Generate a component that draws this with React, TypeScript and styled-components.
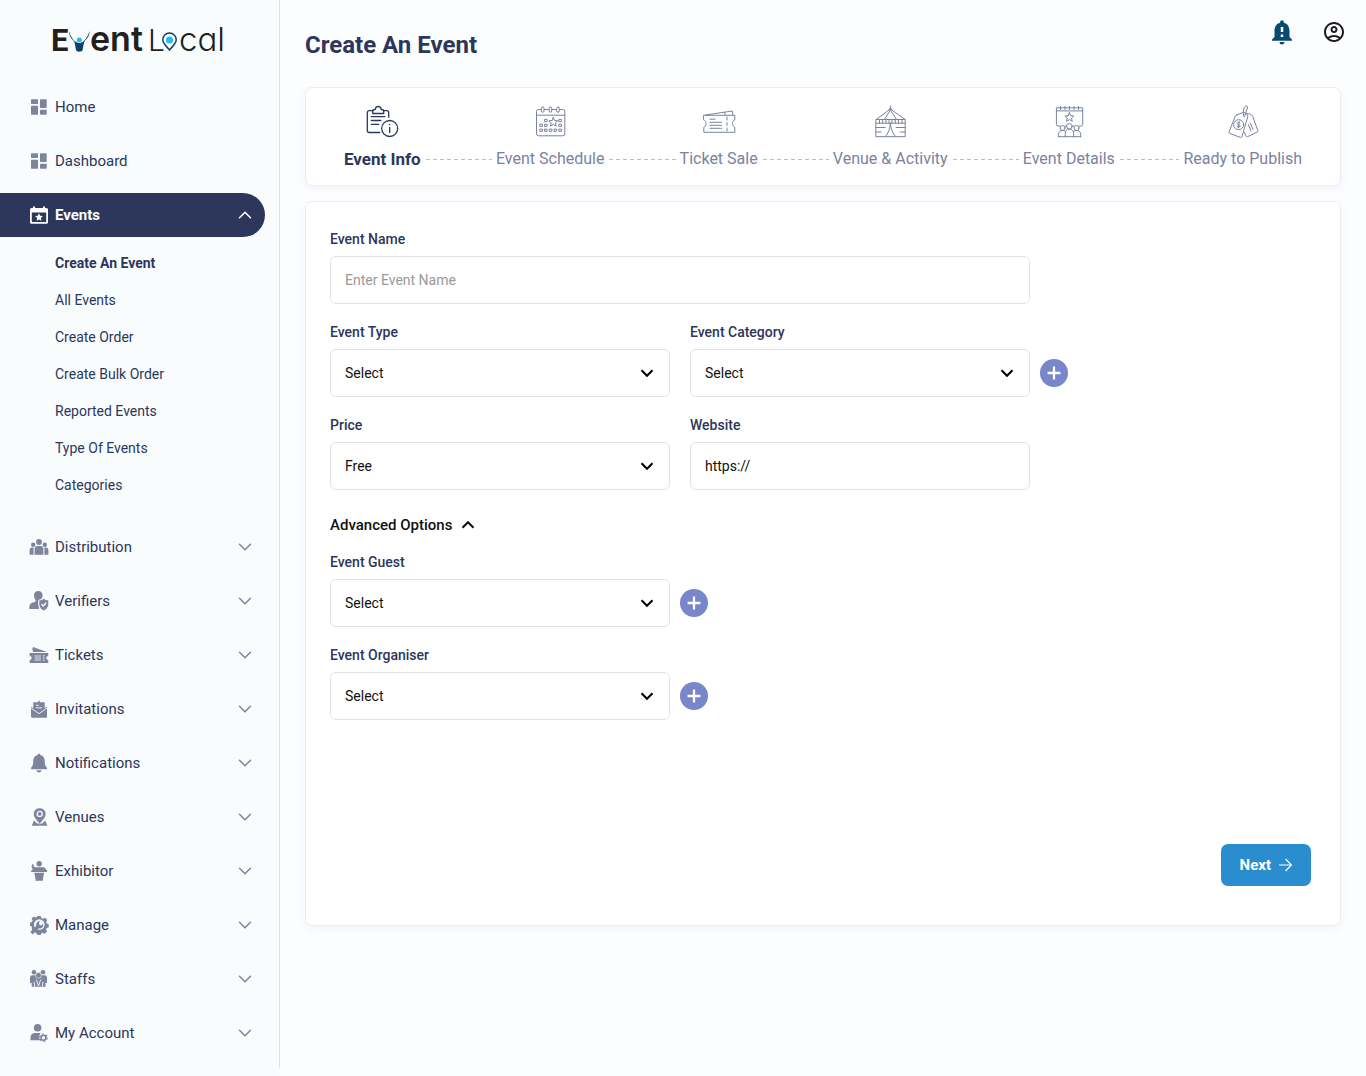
import React, { useState } from "react";
import styled, { createGlobalStyle, css } from "styled-components";
import { MdNotificationImportant, MdOutlineAccountCircle } from "react-icons/md";

const color = {
  navy: "#2d365b",
  muted: "#7b829f",
  icon: "#7d849b",
  sidebar: "#f8fcfd",
  page: "#fcfdff",
  line: "#dfe4ea",
  blue: "#298dcf",
  lilac: "#7787c9",
};

const GlobalStyle = createGlobalStyle`
  *, *::before, *::after { box-sizing: border-box; }
  body {
    margin: 0;
    background: ${color.page};
    color: ${color.navy};
    font-family: Roboto, "Liberation Sans", sans-serif;
    font-size: 15px;
  }
  button, input, select { font: inherit; }
`;

/* ---------- layout ---------- */

const Shell = styled.div`
  display: flex;
  min-height: 100vh;
`;

const Sidebar = styled.aside`
  flex: 0 0 280px;
  background: ${color.sidebar};
`;

const SidebarInner = styled.div`
  border-right: 1px solid #dbe1e5;
  padding: 17px 14px 13px 0;
`;

const LogoLink = styled.a`
  display: block;
  width: 192px;
  height: 44px;
  margin: 0 0 24px 44px;
`;

const List = styled.ul`
  list-style: none;
  margin: 0;
  padding: 0;
`;

const NavList = styled(List)`
  display: flex;
  flex-direction: column;
  gap: 10px;
`;

const navRow = css<{ $active?: boolean }>`
  display: flex;
  align-items: center;
  gap: 6px;
  width: 100%;
  height: 44px;
  padding: 0 14px 0 29px;
  border: 0;
  border-radius: 0 22px 22px 0;
  background: ${(p) => (p.$active ? color.navy : "transparent")};
  color: ${(p) => (p.$active ? "#fff" : color.navy)};
  font-weight: ${(p) => (p.$active ? 700 : 400)};
  text-align: left;
  text-decoration: none;
  cursor: pointer;

  > svg {
    color: ${(p) => (p.$active ? "#fff" : color.icon)};
  }
`;

const NavLink = styled.a<{ $active?: boolean }>`
  ${navRow}
`;

const NavButton = styled.button<{ $active?: boolean }>`
  ${navRow}
`;

const NavText = styled.span`
  flex: 1;
`;

const SubList = styled(List)`
  padding: 8px 0 11px 55px;
`;

const SubLink = styled.a<{ $current?: boolean }>`
  display: block;
  font-size: 14px;
  line-height: 37px;
  font-weight: ${(p) => (p.$current ? 700 : 400)};
  color: ${color.navy};
  text-decoration: none;
`;

const Main = styled.main`
  flex: 1;
  min-width: 0;
  padding: 0 25px 25px;
`;

const Header = styled.header`
  display: flex;
  justify-content: space-between;
  align-items: flex-start;
  height: 87px;
  margin-right: -5px;
`;

const Title = styled.h1`
  margin: 31px 0 0;
  font-size: 24px;
  line-height: 28px;
  font-weight: 700;
`;

const HeaderActions = styled.div`
  display: flex;
  align-items: center;
  gap: 25px;
  margin-top: 17px;
`;

const IconButton = styled.button`
  display: flex;
  padding: 0;
  border: 0;
  background: none;
  cursor: pointer;
`;

const Card = styled.section`
  border: 1px solid #ebedf0;
  border-radius: 7px;
  background: #fff;
  box-shadow: 0 3px 8px rgba(45, 54, 91, 0.05);
`;

const StepCard = styled(Card)`
  margin-bottom: 15px;
  padding: 18px 38px 15px;
`;

const Steps = styled.ol`
  display: flex;
  align-items: flex-end;
  margin: 0;
  padding: 0;
  list-style: none;
`;

const StepItem = styled.li<{ $grow: number }>`
  display: flex;
  align-items: flex-end;
  flex: ${(p) => p.$grow} 0 auto;
`;

const StepButton = styled.button<{ $active?: boolean }>`
  display: flex;
  flex-direction: column;
  align-items: center;
  gap: 10px;
  padding: 0;
  border: 0;
  background: none;
  color: ${(p) => (p.$active ? color.navy : color.muted)};
  font-size: ${(p) => (p.$active ? 17 : 16)}px;
  line-height: 22px;
  font-weight: ${(p) => (p.$active ? 700 : 400)};
  white-space: nowrap;
  cursor: pointer;
`;

const Dashes = styled.span`
  flex: 1;
  height: 1px;
  margin: 0 4px 10px 5px;
  background: repeating-linear-gradient(90deg, #b9bdca 0 4px, transparent 4px 7px);
`;

const FormCard = styled(Card)`
  padding: 29px 29px 39px 24px;
`;

const Row = styled.div`
  display: flex;
  flex-wrap: wrap;
  gap: 20px;
  margin-bottom: 20px;
`;

const Field = styled.div<{ $wide?: boolean }>`
  --control: ${(p) => (p.$wide ? "700px" : "340px")};
  display: flex;
  flex-direction: column;
  gap: 8px;
  max-width: 100%;
`;

const Label = styled.label`
  font-size: 14px;
  line-height: 17px;
  font-weight: 500;
`;

const ControlRow = styled.div`
  display: flex;
  align-items: center;
  gap: 10px;
`;

const control = css`
  width: 100%;
  height: 48px;
  padding: 0 14px;
  border: 1px solid ${color.line};
  border-radius: 6px;
  background: #fff;
  color: #111;
  font-size: 14px;
  outline-color: ${color.lilac};
`;

const Input = styled.input`
  ${control}
  width: var(--control);
  max-width: 100%;
  &::placeholder { color: #999; opacity: 1; }
`;

const SelectWrap = styled.div`
  position: relative;
  width: var(--control);
  max-width: 100%;
  > svg {
    position: absolute;
    right: 17px;
    top: 18px;
    color: #000;
    pointer-events: none;
  }
`;

const Select = styled.select`
  ${control}
  appearance: none;
  cursor: pointer;
`;

const AddButton = styled.button`
  display: flex;
  align-items: center;
  justify-content: center;
  flex: 0 0 28px;
  height: 28px;
  padding: 0;
  border: 0;
  border-radius: 50%;
  background: ${color.lilac};
  cursor: pointer;
`;

const AdvancedButton = styled.button`
  display: flex;
  align-items: center;
  gap: 10px;
  margin: 26px 0 20px;
  padding: 0;
  border: 0;
  background: none;
  color: #111;
  font-weight: 500;
  line-height: 18px;
  cursor: pointer;
`;

const Actions = styled.div`
  display: flex;
  justify-content: flex-end;
  margin-top: 124px;
`;

const NextButton = styled.button`
  display: flex;
  align-items: center;
  gap: 8px;
  height: 42px;
  padding: 0 19px;
  border: 0;
  border-radius: 7px;
  background: ${color.blue};
  color: #fff;
  font-weight: 700;
  cursor: pointer;
`;

/* ---------- drawings ---------- */

const Chevron = ({ up, bold }: { up?: boolean; bold?: boolean }) => (
  <svg width="12" height="12" viewBox="0 0 12 12" fill="none" stroke="currentColor" overflow="visible"
    strokeWidth={bold ? 2 : 1.5} strokeLinecap={bold ? "butt" : "round"} aria-hidden="true">
    <path d={up ? "M.5 8.800L6 3.200l5.500 5.600" : "M.5 3.200L6 8.800l5.500-5.600"} />
  </svg>
);

const Logo = () => (
  <svg width="192" height="44" viewBox="0 0 192 44" role="img" aria-label="Event Local">
    <g fontFamily='Inter, "Liberation Sans", sans-serif' fill="#231f20">
      <text x="7" y="34" fontSize="31" fontWeight="700" fontFamily='Roboto, "Liberation Sans", sans-serif'>E</text>
      <text x="46" y="34" fontSize="34" fontWeight="600">ent</text>
      <text x="104" y="34" fontSize="30" fontWeight="300">L</text>
      <text x="135" y="34" fontSize="33" fontWeight="300" style={{ fontFeatureSettings: '"cv11"' }}>cal</text>
    </g>
    <g transform="translate(8 8)">
      <path d="M17 6c0 5 2.500 7.500 4.500 9.500 1.500 1.500 1.500 5 2.500 9.500.4 2.300 6.200 2.300 6.600 0 1-4.500 1-8 2.500-9.500 2-2 4.500-4.500 4.500-9.500-1.500 5-4.500 10-8 11.500-1.500.8-3.200.8-4.700 0-3.500-1.500-6.500-6.500-8-11.500z" fill="#0b4169" />
      <circle cx="27.300" cy="15" r="2.600" fill="#27bdf2" />
      <path d="M117.500 25c-3-3.800-6.700-6.300-6.700-10.300a6.700 6.700 0 0 1 13.400 0c0 4-3.700 6.500-6.700 10.300z" fill="#fff" stroke="#0b4169" strokeWidth="1.500" />
      <circle cx="117.500" cy="15" r="3.600" fill="#27bdf2" />
    </g>
  </svg>
);

const NavSvg = ({ children }: { children: React.ReactNode }) => (
  <svg width="20" height="20" viewBox="0 0 20 20" fill="currentColor" aria-hidden="true">{children}</svg>
);

const cut = color.sidebar;

const navIcons = {
  grid: (
    <NavSvg>
      <rect x="2" y="2.300" width="7" height="4.700" rx=".7" />
      <rect x="2" y="8.700" width="7" height="9" rx=".7" />
      <rect x="11" y="2.300" width="6.700" height="8.700" rx=".7" />
      <rect x="11" y="12.700" width="6.700" height="5" rx=".7" />
    </NavSvg>
  ),
  events: (
    <NavSvg>
      <path fillRule="evenodd" d="M4 1.500h2V3h8V1.500h2V3h1.500A1.500 1.500 0 0 1 19 4.500v12.700a1.500 1.500 0 0 1-1.500 1.500h-15A1.500 1.500 0 0 1 1 17.200V4.500A1.500 1.500 0 0 1 2.500 3H4zM2.800 7.500V17h14.400V7.500z" />
      <path d="M10 8.200l1.200 2.500 2.700.4-2 1.900.5 2.700-2.400-1.300-2.400 1.300.5-2.700-2-1.900 2.700-.4z" />
    </NavSvg>
  ),
  group: (
    <NavSvg>
      <circle cx="10" cy="5" r="2.900" />
      <circle cx="4.200" cy="7.800" r="2.200" />
      <circle cx="15.800" cy="7.800" r="2.200" />
      <path d="M5.600 17.700v-5.500a3.200 3.200 0 0 1 3.200-3.200h2.400a3.200 3.200 0 0 1 3.200 3.200v5.500zM.6 17.700v-4.400c0-1.600 1-2.700 2.600-2.700h1.500c-.3 2 0 5-.1 7.100zM19.400 17.700v-4.400c0-1.600-1-2.700-2.600-2.700h-1.500c.3 2 0 5 .1 7.100z" />
    </NavSvg>
  ),
  verifier: (
    <NavSvg>
      <path d="M9.300 0c2.600 0 4.300 1.800 4.300 4.300 0 1.200-.5 2.600-1.400 3.600L9 9.700 10 18H.3c0-4 1-5.700 3.500-6.500 2-.6 3-.9 3-2.300C5.500 8 5 6 5 4.300 5 1.800 6.700 0 9.300 0z" />
      <path d="M14.800 7.400c1.300 1 3 1.600 4.900 1.600v4c0 3.300-2 5.600-4.900 6.800-2.900-1.200-4.900-3.500-4.900-6.800V9c1.900 0 3.600-.6 4.900-1.600z" stroke={cut} strokeWidth=".8" />
      <path d="M12.500 13.300l1.700 1.700 3-3.200" fill="none" stroke={cut} strokeWidth="1.400" />
    </NavSvg>
  ),
  ticket: (
    <NavSvg>
      <path d="M3.500 7c.8-.8.500-1.700-.3-2.300L4 2l14 5z" />
      <path d="M.7 8h18.500v3a2 2 0 0 0 0 4v3H.7v-3a2 2 0 0 0 0-4z" />
      <path d="M5.500 11h6.500M5.500 13h6.500M5.500 15h6.500" stroke={cut} strokeWidth=".8" />
      <path d="M14.800 10v6" stroke={cut} strokeWidth="1" strokeDasharray="1.500 .8" />
    </NavSvg>
  ),
  invite: (
    <NavSvg>
      <path d="M4.300 3.300h4.500L10 1.300l1.200 2h4.500V11L10 14.500 4.300 11z" />
      <path d="M2 7.500l8 6 8-6v10a1.200 1.200 0 0 1-1.200 1.200H3.200A1.200 1.200 0 0 1 2 17.500z" />
      <path d="M2 9l8 5.700L18 9M7 6.300h2.500M7 8.800h6" fill="none" stroke={cut} strokeWidth=".9" />
    </NavSvg>
  ),
  bell: (
    <NavSvg>
      <path d="M10 .8c.8 0 1.300.5 1.300 1.300 2.800.6 4.400 2.700 4.400 5.400 0 4 .6 5.500 2.200 7.200.5.600.2 1.600-.7 1.600H2.800c-.9 0-1.200-1-.7-1.600 1.600-1.700 2.200-3.200 2.200-7.200 0-2.700 1.600-4.800 4.400-5.400 0-.8.5-1.300 1.300-1.300z" />
      <path d="M7.500 17.300h5c-.3 1.400-1.300 2.200-2.500 2.200s-2.200-.8-2.500-2.200z" />
    </NavSvg>
  ),
  pin: (
    <NavSvg>
      <path d="M5 13.500L2.800 18.700h15.600l-2.200-5.200-3 3h-5z" />
      <path d="M10.700 1C7.300 1 4.500 3.500 4.500 7c0 3.700 3.500 6.200 6.200 10.300 2.700-4.100 6.200-6.600 6.200-10.300C16.900 3.500 14.100 1 10.700 1z" stroke={cut} strokeWidth=".5" />
      <circle cx="10.700" cy="6.900" r="2.500" fill="none" stroke={cut} strokeWidth="1.300" />
    </NavSvg>
  ),
  podium: (
    <NavSvg>
      <circle cx="10.200" cy="2.700" r="2.700" />
      <path d="M3 3.500l1.300-.6.700 3.200c3 .6 7-.2 9.500.2 1.500.3 2.300 1.300 2.600 2.700h1v2H2.300V9h1.500L2.600 6z" />
      <path d="M5.300 11.700h9.800l-1.100 6.300v1.700H6.500V18z" />
    </NavSvg>
  ),
  manage: (
    <NavSvg>
      <path d="M8.300 1h3.400l.6 2 1.800.8 2-1 2.100 2.200-1 1.900.7 1.700 1.800.6v3l-1.900.7-.7 1.700.9 2-2.200 2.200-1.900-1-1.800.7-.6 1.900H8.500l-.4-1.500L4.600 16 3 14.500l-.3-3L1 10.800v-3l1.900-.7.7-1.700-1-2 2.200-2 1.900 1 1.200-.5z" />
      <circle cx="10.300" cy="9.500" r="5.300" fill={cut} />
      <path d="M1.200 16.900l6-6c-.6-2.500 1.200-4.900 4-4.700L9.900 8.100l.6 1.800 1.900.6 1.800-1.800c.8 3-1.800 5.300-4.300 4.600l-6 6z" />
    </NavSvg>
  ),
  staff: (
    <NavSvg>
      <circle cx="5" cy="3.300" r="2.300" />
      <circle cx="14" cy="3.300" r="2.300" />
      <path d="M1 8.700C1 7 2 6.200 3.500 6.200h12c1.500 0 2.500.8 2.500 2.500V14h-1.500v3.700H2.700V14H1z" />
      <circle cx="9.500" cy="6.300" r="2.900" stroke={cut} strokeWidth=".6" />
      <path d="M5.800 17.700l-.8-5M13.200 17.700l.8-5M7.300 10.500L9.500 17l2.200-6.500" stroke={cut} strokeWidth=".9" fill="none" />
    </NavSvg>
  ),
  account: (
    <NavSvg>
      <circle cx="8.600" cy="4.700" r="3.800" />
      <path d="M1.500 17.200v-2.500C1.500 12 3.300 10 6 10h5.500c-1.600 2.300-1.600 5-.3 7.200z" />
      <circle cx="14.500" cy="14.700" r="2.500" fill="none" stroke="currentColor" strokeWidth="1.600" />
      <circle cx="14.500" cy="14.700" r="3.700" fill="none" stroke="currentColor" strokeWidth="1.200" strokeDasharray="1.950 1.920" />
    </NavSvg>
  ),
};

const StepSvg = ({ children, weight = 1 }: { children: React.ReactNode; weight?: number }) => (
  <svg width="32" height="32" viewBox="0 0 32 32" fill="none" stroke="currentColor" strokeWidth={weight}
    strokeLinejoin="round" strokeLinecap="round" overflow="visible" aria-hidden="true">{children}</svg>
);

const star = (x: number, y: number) =>
  `M${x} ${y - 4.5}l1.300 3 3.200.3-2.400 2.100.8 3.200-2.900-1.700-2.900 1.700.8-3.200-2.400-2.100 3.200-.3z`;

const squares: [number, number][] = [
  [12, 14.5], [26.3, 14.5],
  [7.3, 19.3], [12, 19.3], [26.3, 19.3],
  [7.3, 24.2], [12, 24.2], [16.8, 24.2], [21.5, 24.2], [26.3, 24.2],
];

const stepIcons = {
  info: (
    <StepSvg weight={1.3}>
      <path d="M6.700 4.700H3.300a2 2 0 0 0-2 2v17.800a2 2 0 0 0 2 2h10.400M17.700 4.700h3a2 2 0 0 1 2 2v4.500" />
      <path d="M6.700 7.500V5.200c0-1.200.9-1.700 2.500-1.700C9.400 1.500 10.500.5 12.200.5s2.800 1 3 3c1.600 0 2.500.5 2.500 1.700v2.300z" />
      <path d="M5.300 10.700h13.500M5.300 14.500h9.500M5.300 18.300h7.500" />
      <circle cx="23.700" cy="22.500" r="8" />
      <path d="M23.700 21.500v5M23.700 18.300v.4" />
    </StepSvg>
  ),
  schedule: (
    <StepSvg>
      <path d="M7.200 3.500H4.500a2 2 0 0 0-2 2v22.300a2 2 0 0 0 2 2h24.300a2 2 0 0 0 2-2V5.500a2 2 0 0 0-2-2h-3.300M10.200 3.500h4.700M17.900 3.500h4.600M2.500 9.200h28.300" />
      {[8.7, 16.4, 24].map((x) => <rect key={x} x={x - 1.3} y="1" width="2.600" height="5.300" rx="1.300" />)}
      {squares.map(([x, y]) => <rect key={`${x}-${y}`} x={x - 1.1} y={y - 1.1} width="2.200" height="2.200" />)}
      <path d={star(19.3, 16)} />
    </StepSvg>
  ),
  ticket: (
    <StepSvg>
      <path d="M.8 9.300h31v4.500c-3.200 1.200-3.200 6.300 0 7.500v5H.8v-5c3.200-1.200 3.200-6.300 0-7.500z" />
      <path d="M2.500 9l26.800-4 .7 4M21.500 6.200l.7 2.800" />
      <path d="M24 11v3M24 16.500v3M24 22v3M7 13.200h5M7 16.300h11.500M7 19.300h11.500M7 22.300h11.500" />
    </StepSvg>
  ),
  venue: (
    <StepSvg>
      <path d="M2.200 13.500h29v17.200h-29zM16.400 0v4M16.400 3L2.200 13.500M16.400 3l14.800 10.500M16.400 4l-6 9.500M16.400 4l6.200 9.500M15.200 3h2.400" />
      <path d="M2.200 17.200h29M5.500 13.500v3.700M8.700 13.500v3.700M12 13.500v3.700M15 13.500v3.700M18 13.500v3.700M21.300 13.500v3.700M24.500 13.500v3.700M28 13.500v3.700" />
      <path d="M16.400 17.200c-.4 5.500-2 10-5 13.500M16.400 17.200c.4 5.500 2 10 5.300 13.500" />
      <path d="M2.200 21.500h9M2.200 26h5M31.200 21.500h-9M31.200 26h-5" />
    </StepSvg>
  ),
  details: (
    <StepSvg>
      <path d="M7 20H5a1.600 1.600 0 0 1-1.600-1.600V1.800h26.300v16.600a1.600 1.600 0 0 1-1.600 1.600h-2M12.500 20h1M19.500 20h1M3.400 4.900h26.300M7.500.5v3M12 .5v3M16.500.5v3M21 .5v3M25.500.5v3" />
      <path d={star(16.4, 11.2)} />
      <circle cx="16.400" cy="20.300" r="2.800" />
      <circle cx="9.600" cy="22" r="2.500" />
      <circle cx="23.500" cy="22" r="2.500" />
      <path d="M5.400 30.700v-2c0-2.700 1.700-4.200 4.200-4.200 1.300 0 2 .2 2.800.8M27.700 30.700v-2c0-2.700-1.700-4.200-4.200-4.200-1.300 0-2 .2-2.800.8M12.200 30.700v-3.200c0-2.800 1.500-4.400 4.200-4.400s4.200 1.600 4.200 4.400v3.200M5.400 30.700h22.300" />
    </StepSvg>
  ),
  publish: (
    <StepSvg>
      <path d="M10 8.800l5.800-2.200c2.700-.5 5.300 1.500 4.900 4.200L15 30.500c-.3.900-1 1.100-1.800.8L2.700 27.400c-.8-.3-.9-.9-.6-1.700L8.200 10.400c.3-.8.900-1.300 1.800-1.600z" />
      <path d="M19.500 7.700c2.800-.4 5.400.8 6.200 2.800l5.100 14c.3.800 0 1.400-.8 1.700l-9.500 4.500c-.8.300-1.300 0-1.600-.8l-1.500-3.500" />
      <circle cx="11.700" cy="18.700" r="5" />
      <path d="M13 16.900c-1-.8-2.700-.5-2.700.7 0 1.500 2.900.7 2.900 2.200 0 1.300-2 1.500-3.200.6M12.100 15.500l-.8 6.400" />
      <path d="M16.500 9.500c-.6-3.300 0-8 1.900-9.400 1.400-.9 2.500.3 2 1.900l-2.800 8.400c-.5.800-1 .2-1.100-.9zM21.300 18.500l2.700 6.500M23.300 17l2.700 6.500" />
    </StepSvg>
  ),
};

/* ---------- data ---------- */

type NavEntry = { text: string; icon: keyof typeof navIcons; expandable?: boolean };

const nav: NavEntry[] = [
  { text: "Home", icon: "grid" },
  { text: "Dashboard", icon: "grid" },
  { text: "Events", icon: "events", expandable: true },
  { text: "Distribution", icon: "group", expandable: true },
  { text: "Verifiers", icon: "verifier", expandable: true },
  { text: "Tickets", icon: "ticket", expandable: true },
  { text: "Invitations", icon: "invite", expandable: true },
  { text: "Notifications", icon: "bell", expandable: true },
  { text: "Venues", icon: "pin", expandable: true },
  { text: "Exhibitor", icon: "podium", expandable: true },
  { text: "Manage", icon: "manage", expandable: true },
  { text: "Staffs", icon: "staff", expandable: true },
  { text: "My Account", icon: "account", expandable: true },
];

const eventLinks = [
  "Create An Event", "All Events", "Create Order", "Create Bulk Order",
  "Reported Events", "Type Of Events", "Categories",
];

const steps: { text: string; icon: keyof typeof stepIcons; grow: number }[] = [
  { text: "Event Info", icon: "info", grow: 1 },
  { text: "Event Schedule", icon: "schedule", grow: 1 },
  { text: "Ticket Sale", icon: "ticket", grow: 1 },
  { text: "Venue & Activity", icon: "venue", grow: 1 },
  { text: "Event Details", icon: "details", grow: 0.9 },
  { text: "Ready to Publish", icon: "publish", grow: 0 },
];

/* ---------- form parts ---------- */

type SelectFieldProps = { id: string; label: string; options: string[]; addLabel?: string };

const SelectField = ({ id, label, options, addLabel }: SelectFieldProps) => (
  <Field>
    <Label htmlFor={id}>{label}</Label>
    <ControlRow>
      <SelectWrap>
        <Select id={id}>
          {options.map((o) => <option key={o}>{o}</option>)}
        </Select>
        <Chevron bold />
      </SelectWrap>
      {addLabel && (
        <AddButton type="button" aria-label={addLabel}>
          <svg width="14" height="14" viewBox="0 0 14 14" stroke="#fff" strokeWidth="2.300" aria-hidden="true">
            <path d="M7 .6v12.800M.6 7h12.800" />
          </svg>
        </AddButton>
      )}
    </ControlRow>
  </Field>
);

export default function App() {
  const [open, setOpen] = useState("Events");
  const [advanced, setAdvanced] = useState(true);

  return (
    <>
      <GlobalStyle />
      <Shell>
        <Sidebar>
          <SidebarInner>
            <LogoLink href="#"><Logo /></LogoLink>
            <nav aria-label="Main">
              <NavList>
                {nav.map(({ text, icon, expandable }) => {
                  const active = open === text;
                  return (
                    <li key={text}>
                      {expandable ? (
                        <NavButton type="button" $active={active} aria-expanded={active}
                          onClick={() => setOpen(active ? "" : text)}>
                          {navIcons[icon]}
                          <NavText>{text}</NavText>
                          <Chevron up={active} />
                        </NavButton>
                      ) : (
                        <NavLink href="#">{navIcons[icon]}<NavText>{text}</NavText></NavLink>
                      )}
                      {text === "Events" && active && (
                        <SubList>
                          {eventLinks.map((link, i) => (
                            <li key={link}><SubLink href="#" $current={i === 0}>{link}</SubLink></li>
                          ))}
                        </SubList>
                      )}
                    </li>
                  );
                })}
              </NavList>
            </nav>
          </SidebarInner>
        </Sidebar>

        <Main>
          <Header>
            <Title>Create An Event</Title>
            <HeaderActions>
              <IconButton type="button" aria-label="Alerts"><MdNotificationImportant size={30} color="#0b4a70" /></IconButton>
              <IconButton type="button" aria-label="Profile"><MdOutlineAccountCircle size={24} color="#1c1b1f" /></IconButton>
            </HeaderActions>
          </Header>

          <StepCard aria-label="Progress">
            <Steps>
              {steps.map(({ text, icon, grow }, i) => (
                <StepItem key={text} $grow={grow}>
                  <StepButton type="button" $active={i === 0} aria-current={i === 0 ? "step" : undefined}>
                    {stepIcons[icon]}
                    {text}
                  </StepButton>
                  {grow > 0 && <Dashes />}
                </StepItem>
              ))}
            </Steps>
          </StepCard>

          <FormCard as="form">
            <Row>
              <Field $wide>
                <Label htmlFor="name">Event Name</Label>
                <Input id="name" placeholder="Enter Event Name" />
              </Field>
            </Row>
            <Row>
              <SelectField id="type" label="Event Type" options={["Select"]} />
              <SelectField id="category" label="Event Category" options={["Select"]} addLabel="Add category" />
            </Row>
            <Row>
              <SelectField id="price" label="Price" options={["Free", "Paid"]} />
              <Field>
                <Label htmlFor="website">Website</Label>
                <Input id="website" defaultValue="https://" />
              </Field>
            </Row>
            <AdvancedButton type="button" aria-expanded={advanced} onClick={() => setAdvanced(!advanced)}>
              Advanced Options
              <Chevron up={advanced} bold />
            </AdvancedButton>
            {advanced && (
              <>
                <Row><SelectField id="guest" label="Event Guest" options={["Select"]} addLabel="Add guest" /></Row>
                <Row><SelectField id="organiser" label="Event Organiser" options={["Select"]} addLabel="Add organiser" /></Row>
              </>
            )}
            <Actions>
              <NextButton type="button">
                Next
                <svg width="13" height="14" viewBox="0 0 13 14" fill="none" stroke="#fff" strokeWidth="1.200" aria-hidden="true">
                  <path d="M0 7h12.300M6.500 1l6 6-6 6" />
                </svg>
              </NextButton>
            </Actions>
          </FormCard>
        </Main>
      </Shell>
    </>
  );
}
